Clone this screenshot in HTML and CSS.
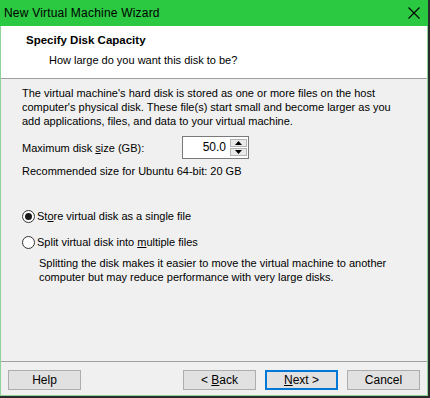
FILE: index.html
```html
<!DOCTYPE html>
<html>
<head>
<meta charset="utf-8">
<title>New Virtual Machine Wizard</title>
<link rel="stylesheet" href="styles.css">
</head>
<body>
	<div class="window">
		<div class="titlebar">
			<span class="title">New Virtual Machine Wizard</span>
			<svg class="close" width="12" height="12" viewBox="0 0 12 12"><path d="M0.5 0.5 L11.5 11.5 M11.5 0.5 L0.5 11.5" stroke="#000" stroke-width="1.1" fill="none"/></svg>
		</div>
		<div class="header">
			<div class="heading">Specify Disk Capacity</div>
			<div class="subheading">How large do you want this disk to be?</div>
		</div>
		<div class="content">
			<p class="intro">The virtual machine's hard disk is stored as one or more files on the host computer's physical disk. These file(s) start small and become larger as you add applications, files, and data to your virtual machine.</p>
			<div class="size-row">
				<label class="size-label">Maximum disk <u>s</u>ize (GB):</label>
				<div class="spin">
					<span class="spin-value">50.0</span>
					<div class="spin-btns">
						<span class="spin-btn"><svg width="7" height="4" viewBox="0 0 7 4"><path d="M3.5 0 L7 4 L0 4 Z" fill="#000"/></svg></span>
						<span class="spin-btn"><svg width="7" height="4" viewBox="0 0 7 4"><path d="M0 0 L7 0 L3.5 4 Z" fill="#000"/></svg></span>
					</div>
				</div>
			</div>
			<div class="recommended">Recommended size for Ubuntu 64-bit: 20 GB</div>

			<div class="option">
				<span class="radio checked"></span>
				<span>St<u>o</u>re virtual disk as a single file</span>
			</div>
			<div class="option">
				<span class="radio"></span>
				<span>Split virtual disk into <u>m</u>ultiple files</span>
			</div>
			<p class="option-note">Splitting the disk makes it easier to move the virtual machine to another computer but may reduce performance with very large disks.</p>
		</div>
		<div class="footer">
			<button class="btn">Help</button>
			<div class="spacer"></div>
			<button class="btn">&lt; <u>B</u>ack</button>
			<button class="btn default"><u>N</u>ext &gt;</button>
			<button class="btn">Cancel</button>
		</div>
	</div>
</body>
</html>
```

FILE: styles.css
```css
* {
	box-sizing: border-box;
}

html, body {
	margin: 0;
	padding: 0;
}

body {
	width: 430px;
	height: 398px;
	background: #2b2b2b;
	font-family: "Liberation Sans", Arial, sans-serif;
	font-size: 11px;
	color: #000;
	overflow: hidden;
}

.window {
	width: 428px;
	height: 396px;
	display: flex;
	flex-direction: column;
	background: #f0f0f0;
	border: 1px solid #8fd39a;
	border-top: 0;
}

.titlebar {
	height: 26px;
	margin: 0 -1px;
	background: #2bc842;
	display: flex;
	align-items: center;
	padding: 0 8px 0 4px;
}

.title {
	flex: 1;
	font-size: 12px;
	letter-spacing: 0.2px;
}

.close {
	display: block;
}

.header {
	height: 53px;
	background: #fff;
	border-bottom: 1px solid #a0a0a0;
	padding: 7px 0 0 25px;
}

.heading {
	font-weight: bold;
	font-size: 11.5px;
	line-height: 14px;
}

.subheading {
	padding: 6px 0 0 23px;
	line-height: 14px;
}

.content {
	flex: 1;
	padding: 7px 20px 0 21px;
}

.intro {
	margin: 0;
	line-height: 14px;
}

.size-row {
	display: flex;
	align-items: center;
	margin-top: 8px;
}

.size-label {
	width: 160px;
}

.spin {
	display: flex;
	width: 67px;
	height: 23px;
	background: #fff;
	border: 1px solid #7a7a7a;
	padding: 2px 1px 2px 2px;
}

.spin-value {
	flex: 1;
	text-align: right;
	padding-right: 4px;
	font-size: 12px;
	line-height: 17px;
}

.spin-btns {
	display: flex;
	flex-direction: column;
	gap: 1px;
	width: 17px;
}

.spin-btn {
	flex: 1;
	display: flex;
	align-items: center;
	justify-content: center;
	background: #e9e9e9;
	border: 1px solid #b5b5b5;
}

.spin-btn svg {
	display: block;
}

.recommended {
	margin-top: 5px;
	line-height: 14px;
}

.option {
	display: flex;
	align-items: center;
	gap: 2px;
	margin-top: 31px;
	line-height: 14px;
}

.option + .option {
	margin-top: 12px;
}

.radio {
	width: 13px;
	height: 13px;
	border: 1px solid #333;
	border-radius: 50%;
	background: #fff;
	position: relative;
}

.radio.checked::after {
	content: "";
	position: absolute;
	left: 2px;
	top: 2px;
	width: 7px;
	height: 7px;
	border-radius: 50%;
	background: #1a1a1a;
}

.option-note {
	margin: 7px 0 0 17px;
	line-height: 14px;
}

.footer {
	height: 34px;
	border-top: 1px solid #a0a0a0;
	display: flex;
	align-items: flex-start;
	gap: 9px;
	padding: 8px 7px 0 7px;
}

.spacer {
	flex: 1;
}

.btn {
	width: 73px;
	height: 20px;
	margin: 0;
	padding: 0;
	font-family: inherit;
	font-size: 12px;
	color: #000;
	background: #e1e1e1;
	border: 1px solid #adadad;
}

.btn.default {
	border: 2px solid #0078d7;
}
```
